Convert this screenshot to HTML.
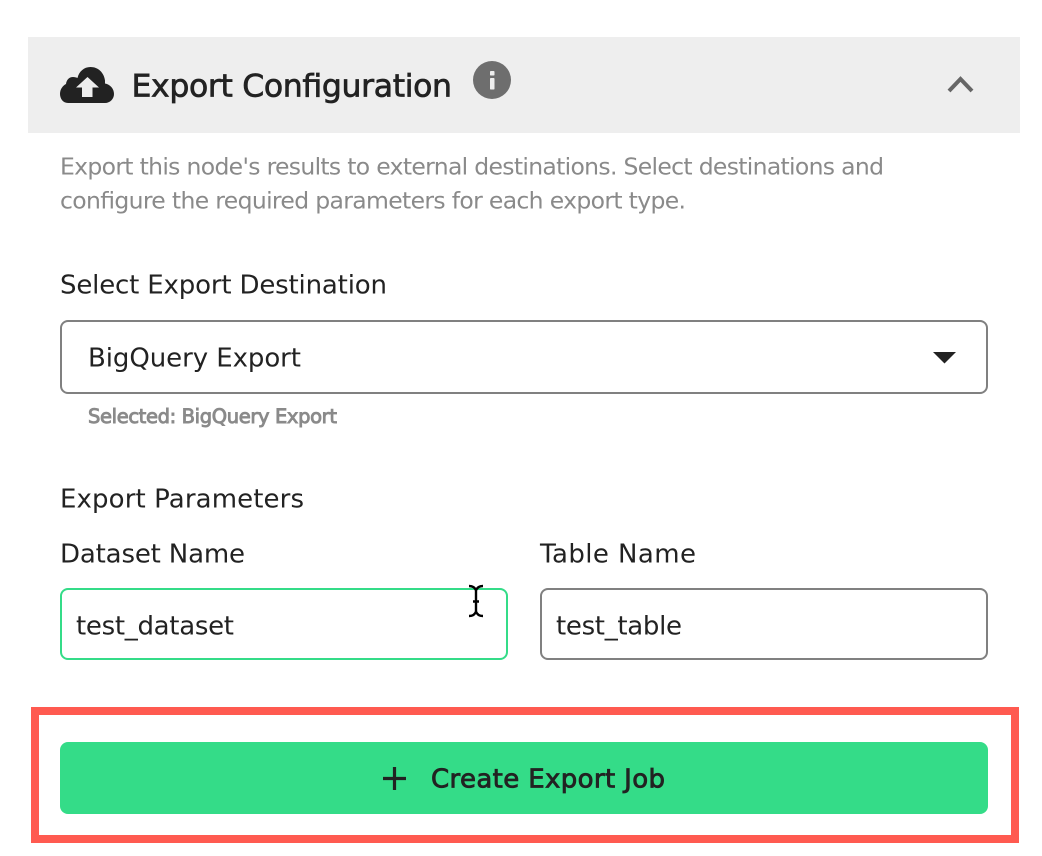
<!DOCTYPE html>
<html><head><meta charset="utf-8"><style>
html,body{margin:0;padding:0;background:#fff;width:1042px;height:856px;overflow:hidden}
svg{display:block}
text{font-family:"DejaVu Sans",sans-serif;fill:#222}
</style></head><body>
<svg width="1042" height="856" viewBox="0 0 1042 856" xmlns="http://www.w3.org/2000/svg">
<rect x="28" y="37" width="992" height="96" fill="#eeeeee"/>
<path d="M68 103C63 103 60 98.500 60 94C60 89 63 85.500 66 84C66.500 80 69 77 73 77C75 77 76.500 77.500 77.500 78C79 71.500 84 67 90.500 67C98 67 104 72.500 105 80.500C105 81.500 105 82.500 105 83.500C110.500 84.500 114 89 114 94C114 99 110 103 105 103Z" fill="#222"/>
<path d="M87.500 77L99 87.500H92.500V97H82V87.500H76Z" fill="#eee"/>
<text x="131.500" y="96.500" font-size="31.500" textLength="320.500" style="stroke:#222;stroke-width:.7px">Export Configuration</text>
<circle cx="492" cy="80" r="19" fill="#6e6e6e"/>
<rect x="490" y="71" width="4.500" height="4.500" rx=".8" fill="#eee"/>
<rect x="490" y="78" width="4.500" height="11.500" rx=".8" fill="#eee"/>
<path d="M949 91L960.500 79L972 91" fill="none" stroke="#666" stroke-width="4"/>
<text x="60" y="174.500" font-size="23.500" textLength="824" style="fill:#8a8a8a">Export this node's results to external destinations. Select destinations and</text>
<text x="60" y="208.500" font-size="23.500" textLength="626" style="fill:#8a8a8a">configure the required parameters for each export type.</text>
<text x="60" y="293.500" font-size="26" textLength="327">Select Export Destination</text>
<rect x="61" y="321" width="926" height="72" rx="7" fill="#fff" stroke="#808080" stroke-width="2"/>
<text x="88" y="366.500" font-size="26" textLength="213">BigQuery Export</text>
<path d="M933 352H956L944.500 363.500Z" fill="#222"/>
<text x="88" y="423" font-size="19.500" textLength="249" style="fill:#8a8a8a;stroke:#8a8a8a;stroke-width:.9px">Selected: BigQuery Export</text>
<text x="60" y="507.500" font-size="26" textLength="244">Export Parameters</text>
<text x="60" y="562.500" font-size="26" textLength="185">Dataset Name</text>
<text x="540" y="562.500" font-size="26" textLength="156">Table Name</text>
<rect x="61" y="589" width="446" height="70" rx="7" fill="#fff" stroke="#34dc88" stroke-width="2"/>
<rect x="541" y="589" width="446" height="70" rx="7" fill="#fff" stroke="#808080" stroke-width="2"/>
<text x="76" y="634.500" font-size="26" textLength="158">test_dataset</text>
<text x="556" y="634.500" font-size="26" textLength="126">test_table</text>
<path d="M469 586C473 586 475 587.500 476 590.500V611.500C475 614.500 473 616 469 616M483 586C479 586 477 587.500 476 590.500V611.500C477 614.500 479 616 483 616M473 601.500H479" fill="none" stroke="#000" stroke-width="2.400"/>
<rect x="35" y="711" width="980" height="128" fill="none" stroke="#ff5a50" stroke-width="8"/>
<rect x="60" y="742" width="928" height="72" rx="8" fill="#34dc88"/>
<path d="M394.500 767V790M383 778.500H406" fill="none" stroke="#222" stroke-width="3.200"/>
<text x="431" y="787.500" font-size="26" textLength="234" style="stroke:#222;stroke-width:.8px">Create Export Job</text>
</svg>
</body></html>
